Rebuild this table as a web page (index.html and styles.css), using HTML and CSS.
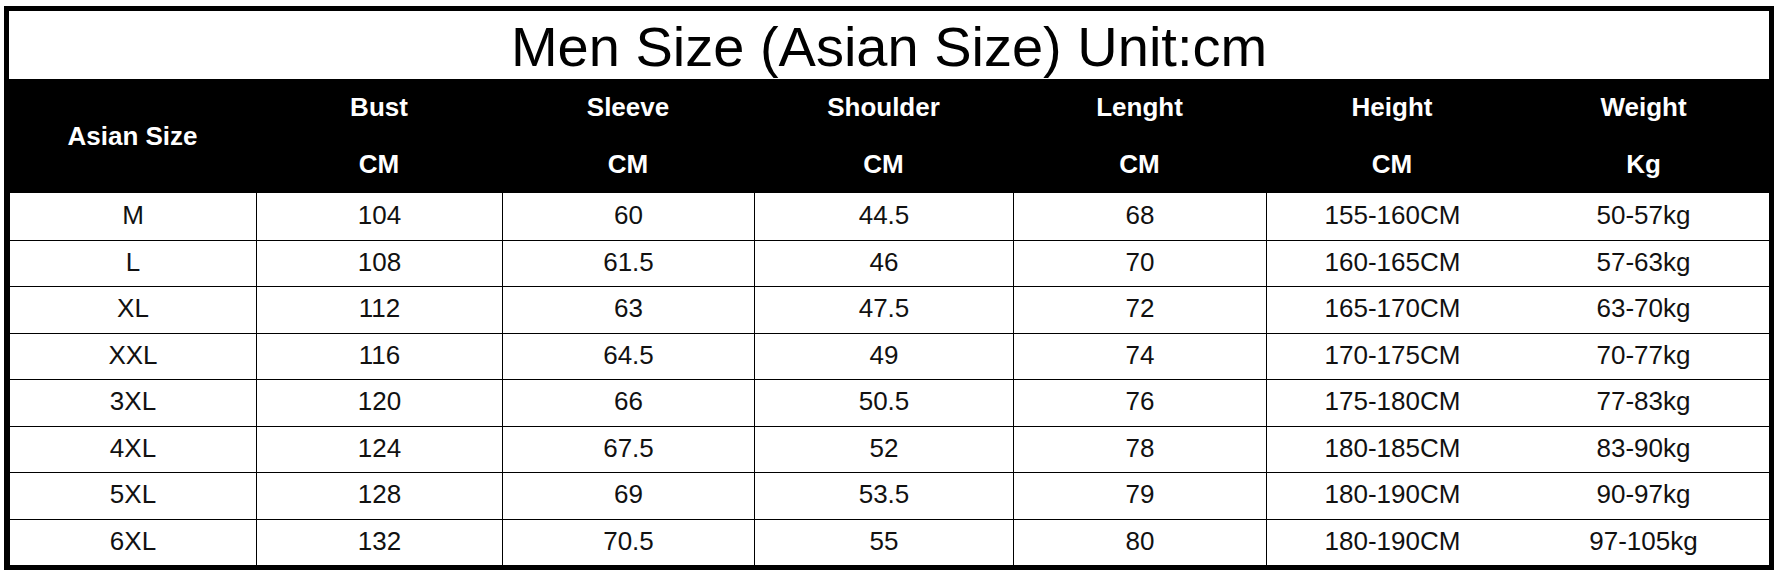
FILE: index.html
```html
<!DOCTYPE html>
<html lang="en">
<head>
<meta charset="utf-8">
<title>Men Size (Asian Size) Unit:cm</title>
<link rel="stylesheet" href="styles.css">
</head>
<body>
<div class="sheet">
  <div class="title">Men Size (Asian Size) Unit:cm</div>
  <div class="grid">
    <div class="hcell span2">Asian Size</div>
    <div class="hcell">Bust</div>
    <div class="hcell">Sleeve</div>
    <div class="hcell">Shoulder</div>
    <div class="hcell">Lenght</div>
    <div class="hcell">Height</div>
    <div class="hcell">Weight</div>
    <div class="hcell">CM</div>
    <div class="hcell">CM</div>
    <div class="hcell">CM</div>
    <div class="hcell">CM</div>
    <div class="hcell">CM</div>
    <div class="hcell">Kg</div>

    <div class="cell first">M</div><div class="cell first">104</div><div class="cell first">60</div><div class="cell first">44.5</div><div class="cell first">68</div><div class="cell first">155-160CM</div><div class="cell first">50-57kg</div>
    <div class="cell">L</div><div class="cell">108</div><div class="cell">61.5</div><div class="cell">46</div><div class="cell">70</div><div class="cell">160-165CM</div><div class="cell">57-63kg</div>
    <div class="cell">XL</div><div class="cell">112</div><div class="cell">63</div><div class="cell">47.5</div><div class="cell">72</div><div class="cell">165-170CM</div><div class="cell">63-70kg</div>
    <div class="cell">XXL</div><div class="cell">116</div><div class="cell">64.5</div><div class="cell">49</div><div class="cell">74</div><div class="cell">170-175CM</div><div class="cell">70-77kg</div>
    <div class="cell">3XL</div><div class="cell">120</div><div class="cell">66</div><div class="cell">50.5</div><div class="cell">76</div><div class="cell">175-180CM</div><div class="cell">77-83kg</div>
    <div class="cell">4XL</div><div class="cell">124</div><div class="cell">67.5</div><div class="cell">52</div><div class="cell">78</div><div class="cell">180-185CM</div><div class="cell">83-90kg</div>
    <div class="cell">5XL</div><div class="cell">128</div><div class="cell">69</div><div class="cell">53.5</div><div class="cell">79</div><div class="cell">180-190CM</div><div class="cell">90-97kg</div>
    <div class="cell">6XL</div><div class="cell">132</div><div class="cell">70.5</div><div class="cell">55</div><div class="cell">80</div><div class="cell">180-190CM</div><div class="cell">97-105kg</div>
  </div>
</div>
</body>
</html>
```

FILE: styles.css
```css
html, body {
  margin: 0;
  padding: 0;
  background: #ffffff;
}

body {
  font-family: "Liberation Sans", Arial, sans-serif;
  color: #000;
}

.sheet {
  box-sizing: border-box;
  width: 1770px;
  height: 564px;
  margin: 6px 0 0 4px;
  border: 5px solid #000;
  background: #fff;
}

.title {
  height: 68px;
  display: flex;
  align-items: center;
  justify-content: center;
  font-size: 56px;
  line-height: 1;
  color: #000;
  padding-top: 3px;
  box-sizing: border-box;
}

.grid {
  display: grid;
  grid-template-columns: 247px 246px 252px 259px 253px 252px 251px;
  grid-template-rows: 57px 57px repeat(8, 46.5px);
}

.hcell {
  background: #000;
  color: #fff;
  font-weight: bold;
  font-size: 26px;
  display: flex;
  align-items: center;
  justify-content: center;
}

.span2 {
  grid-row: span 2;
}

.cell {
  box-sizing: border-box;
  display: flex;
  align-items: center;
  justify-content: center;
  font-size: 26px;
  color: #111;
  border-top: 1px solid #000;
  border-left: 1px solid #000;
  padding-bottom: 2px;
}

.cell.first {
  border-top: none;
}

.cell:nth-child(7n + 6) {
  border-left: none;
}
```
